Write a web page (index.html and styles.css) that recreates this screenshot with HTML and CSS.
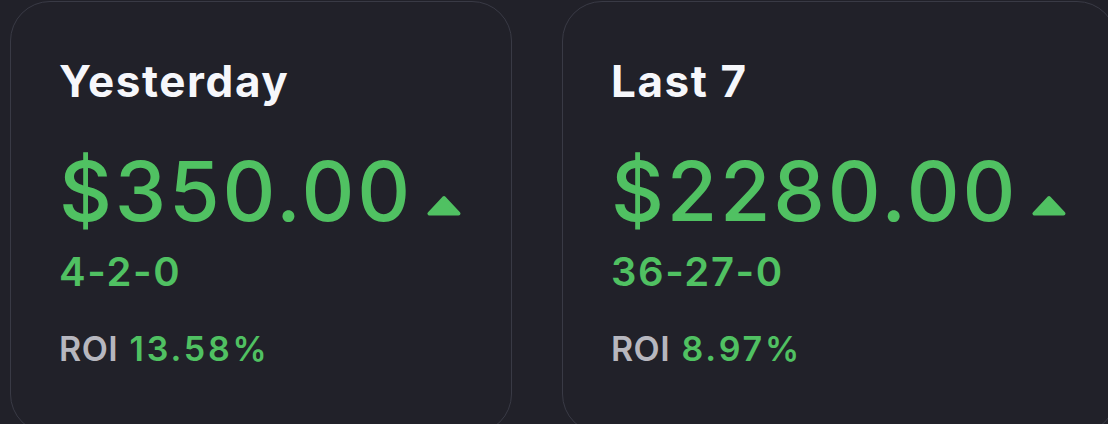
FILE: index.html
```html
<!DOCTYPE html>
<html lang="en">
<head>
  <meta charset="UTF-8">
  <meta name="viewport" content="width=device-width, initial-scale=1.0">
  <title>Results</title>
  <link rel="stylesheet" href="styles.css">
</head>
<body>
  <div class="summary">
    <!-- Yesterday -->
    <div class="stat-card">
      <h2 class="stat-title">Yesterday</h2>
      <div class="stat-amount">
        <span>$350.00</span>
        <svg class="trend-up" viewBox="0 0 34 21" xmlns="http://www.w3.org/2000/svg">
          <polygon points="17,3 2.5,18.5 31.5,18.5" fill="currentColor" stroke="currentColor" stroke-width="4" stroke-linejoin="round"></polygon>
        </svg>
      </div>
      <div class="stat-record">4-2-0</div>
      <div class="stat-roi"><span class="roi-label">ROI</span> 13.58%</div>
    </div>

    <!-- Last 7 -->
    <div class="stat-card">
      <h2 class="stat-title">Last 7</h2>
      <div class="stat-amount">
        <span>$2280.00</span>
        <svg class="trend-up" viewBox="0 0 34 21" xmlns="http://www.w3.org/2000/svg">
          <polygon points="17,3 2.5,18.5 31.5,18.5" fill="currentColor" stroke="currentColor" stroke-width="4" stroke-linejoin="round"></polygon>
        </svg>
      </div>
      <div class="stat-record">36-27-0</div>
      <div class="stat-roi"><span class="roi-label">ROI</span> 8.97%</div>
    </div>
  </div>
</body>
</html>
```

FILE: styles.css
```css
* {
  margin: 0;
  padding: 0;
  box-sizing: border-box;
  font-family: Inter, "Liberation Sans", Arial, sans-serif;
}

body {
  background-color: #212129;
  overflow: hidden;
}

.summary {
  display: flex;
  align-items: flex-start;
  gap: 50px;
  padding: 1px 0 0 10px;
}

.stat-card {
  flex: none;
  border: 1px solid #393a45;
  border-radius: 40px;
  padding: 57px 50px 67px 48px;
  color: #50c162;
}

.stat-title {
  font-size: 44px;
  line-height: 1;
  font-weight: 700;
  letter-spacing: 1.6px;
  color: #f6f7fb;
}

.stat-amount {
  display: flex;
  align-items: flex-end;
  margin-top: 48px;
  font-size: 82px;
  line-height: 1;
  font-weight: 500;
  letter-spacing: 2.8px;
}

.trend-up {
  width: 34px;
  height: 21px;
  margin-left: 14px;
  margin-bottom: 17px;
}

.stat-record {
  margin-top: 19px;
  font-size: 40px;
  line-height: 1;
  font-weight: 600;
  letter-spacing: 1.6px;
}

.stat-roi {
  margin-top: 40px;
  font-size: 34px;
  line-height: 1;
  font-weight: 600;
  letter-spacing: 2.8px;
}

.roi-label {
  color: #b7b7bf;
  letter-spacing: 0.5px;
}
```
